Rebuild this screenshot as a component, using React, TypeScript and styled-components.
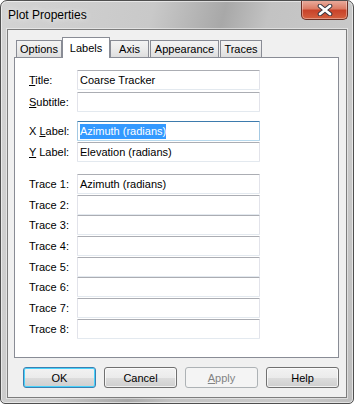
import styled, { createGlobalStyle } from "styled-components";

const GlobalStyle = createGlobalStyle`
  html, body {
    margin: 0;
    padding: 0;
    background: #ffffff;
  }
  body {
    font-family: "Liberation Sans", Arial, sans-serif;
    font-size: 11px;
    color: #000000;
  }
`;

const Window = styled.div`
  box-sizing: border-box;
  width: 354px;
  height: 404px;
  border: 1px solid #4f4f4f;
  border-radius: 7px 7px 5px 5px;
  background: linear-gradient(
    104deg,
    #d3d3d3 0%,
    #c9c9c9 34%,
    #a8a8a8 50%,
    #c3c3c3 60%,
    #cacaca 85%,
    #bdbdbd 100%
  );
  box-shadow: inset 0 0 0 1px rgba(255, 255, 255, 0.55);
  display: flex;
  flex-direction: column;
  overflow: hidden;
`;

const TitleBar = styled.div`
  height: 28px;
  display: flex;
  align-items: center;
  padding: 0 5px 0 7px;
`;

const Caption = styled.div`
  flex: 1;
  font-size: 12px;
  color: #000000;
  text-shadow: 0 0 6px rgba(255, 255, 255, 0.9);
`;

const CloseButton = styled.div`
  align-self: flex-start;
  margin-top: -1px;
  width: 47px;
  height: 20px;
  box-sizing: border-box;
  border: 1px solid #6b2f24;
  border-top: none;
  border-radius: 0 0 5px 5px;
  background: linear-gradient(
    180deg,
    #eab0a2 0%,
    #dc7d66 45%,
    #c8432a 55%,
    #d4603f 100%
  );
  box-shadow: inset 0 0 0 1px rgba(255, 255, 255, 0.35);
  display: flex;
  align-items: center;
  justify-content: center;
`;

const Client = styled.div`
  flex: 1;
  margin: 0 6px 5px 6px;
  border: 1px solid #7d7d7d;
  background: #f0f0f0;
  box-shadow: 0 0 0 1px rgba(255, 255, 255, 0.45);
  padding: 7px 7px 0 6px;
  display: flex;
  flex-direction: column;
`;

const TabStrip = styled.div`
  height: 20px;
  display: flex;
  align-items: flex-end;
  gap: 1px;
  padding-left: 2px;
  position: relative;
  z-index: 1;
`;

const Tab = styled.div<{ $w: number; $active?: boolean }>`
  box-sizing: border-box;
  width: ${(p) => p.$w}px;
  height: ${(p) => (p.$active ? 21 : 17)}px;
  margin-bottom: ${(p) => (p.$active ? -1 : 0)}px;
  margin-left: ${(p) => (p.$active ? -1 : 0)}px;
  margin-right: ${(p) => (p.$active ? -1 : 0)}px;
  border: 1px solid #898c95;
  border-bottom: none;
  background: ${(p) =>
    p.$active
      ? "#ffffff"
      : "linear-gradient(180deg, #f3f3f3 0%, #ebebeb 50%, #dedede 100%)"};
  display: flex;
  align-items: center;
  justify-content: center;
  font-size: 11px;
  padding-bottom: ${(p) => (p.$active ? 1 : 0)}px;
`;

const Panel = styled.div`
  box-sizing: border-box;
  height: 301px;
  border: 1px solid #898c95;
  background: #ffffff;
  padding: 12px 0 0 14px;
  display: flex;
  flex-direction: column;
`;

const Group = styled.div<{ $gap: number; $top?: number }>`
  display: flex;
  flex-direction: column;
  gap: ${(p) => p.$gap}px;
  margin-top: ${(p) => p.$top ?? 0}px;
`;

const Row = styled.div`
  display: grid;
  grid-template-columns: 48px 183px;
  align-items: center;
  height: 20px;
`;

const Label = styled.div`
  font-size: 11px;
  white-space: nowrap;
`;

const U = styled.span`
  text-decoration: underline;
  text-underline-offset: 1px;
`;

const Field = styled.div<{ $focused?: boolean }>`
  box-sizing: border-box;
  height: 20px;
  border: 1px solid ${(p) => (p.$focused ? "#a4c9e3" : "#e2e3ea")};
  border-top-color: ${(p) => (p.$focused ? "#3d7bad" : "#abadb3")};
  border-bottom-color: ${(p) => (p.$focused ? "#b7d9ed" : "#e3e9ef")};
  border-radius: 1px;
  background: #ffffff;
  padding: 0 2px;
  display: flex;
  align-items: center;
  font-size: 11px;
  white-space: nowrap;
  overflow: hidden;
`;

const Selection = styled.span`
  display: inline-block;
  line-height: 15px;
  background: #3399ff;
  color: #ffffff;
`;

const ButtonRow = styled.div`
  margin-top: 9px;
  display: flex;
  justify-content: flex-end;
  gap: 8px;
`;

const Button = styled.div<{ $default?: boolean; $disabled?: boolean }>`
  box-sizing: border-box;
  width: 73px;
  height: 21px;
  border: 1px solid
    ${(p) => (p.$default ? "#3c7fb1" : p.$disabled ? "#adb2b5" : "#707070")};
  border-radius: 3px;
  background: ${(p) =>
    p.$disabled
      ? "#f4f4f4"
      : "linear-gradient(180deg, #f2f2f2 0%, #ebebeb 50%, #dddddd 51%, #cfcfcf 100%)"};
  box-shadow: ${(p) =>
    p.$default
      ? "inset 0 0 0 1px #48d2fb"
      : p.$disabled
      ? "none"
      : "inset 0 0 0 1px rgba(255, 255, 255, 0.7)"};
  color: ${(p) => (p.$disabled ? "#838383" : "#000000")};
  display: flex;
  align-items: center;
  justify-content: center;
  font-size: 11px;
`;

const tabs = [
  { name: "Options", w: 46 },
  { name: "Labels", w: 48, active: true },
  { name: "Axis", w: 39 },
  { name: "Appearance", w: 69 },
  { name: "Traces", w: 42 },
];

const traces = ["Azimuth (radians)", "", "", "", "", "", "", ""];

export default function App() {
  return (
    <>
      <GlobalStyle />
      <Window>
        <TitleBar>
          <Caption>Plot Properties</Caption>
          <CloseButton>
            <svg width="16" height="12" viewBox="0 0 16 12">
              <path
                d="M3 2 L13 10 M13 2 L3 10"
                stroke="#34343f"
                strokeWidth="4.6"
                strokeLinecap="round"
              />
              <path
                d="M3 2 L13 10 M13 2 L3 10"
                stroke="#ffffff"
                strokeWidth="2.8"
                strokeLinecap="round"
              />
            </svg>
          </CloseButton>
        </TitleBar>
        <Client>
          <TabStrip>
            {tabs.map((t) => (
              <Tab key={t.name} $w={t.w} $active={t.active}>
                {t.name}
              </Tab>
            ))}
          </TabStrip>
          <Panel>
            <Group $gap={2}>
              <Row>
                <Label>
                  <U>T</U>itle:
                </Label>
                <Field>Coarse Tracker</Field>
              </Row>
              <Row>
                <Label>
                  <U>S</U>ubtitle:
                </Label>
                <Field />
              </Row>
            </Group>
            <Group $gap={1} $top={9}>
              <Row>
                <Label>
                  X <U>L</U>abel:
                </Label>
                <Field $focused>
                  <Selection>Azimuth (radians)</Selection>
                </Field>
              </Row>
              <Row>
                <Label>
                  <U>Y</U> Label:
                </Label>
                <Field>Elevation (radians)</Field>
              </Row>
            </Group>
            <Group $gap={0.7} $top={12}>
              {traces.map((value, i) => (
                <Row key={i}>
                  <Label>Trace {i + 1}:</Label>
                  <Field>{value}</Field>
                </Row>
              ))}
            </Group>
          </Panel>
          <ButtonRow>
            <Button $default>OK</Button>
            <Button>Cancel</Button>
            <Button $disabled>
              <span>
                <U>A</U>pply
              </span>
            </Button>
            <Button>Help</Button>
          </ButtonRow>
        </Client>
      </Window>
    </>
  );
}
